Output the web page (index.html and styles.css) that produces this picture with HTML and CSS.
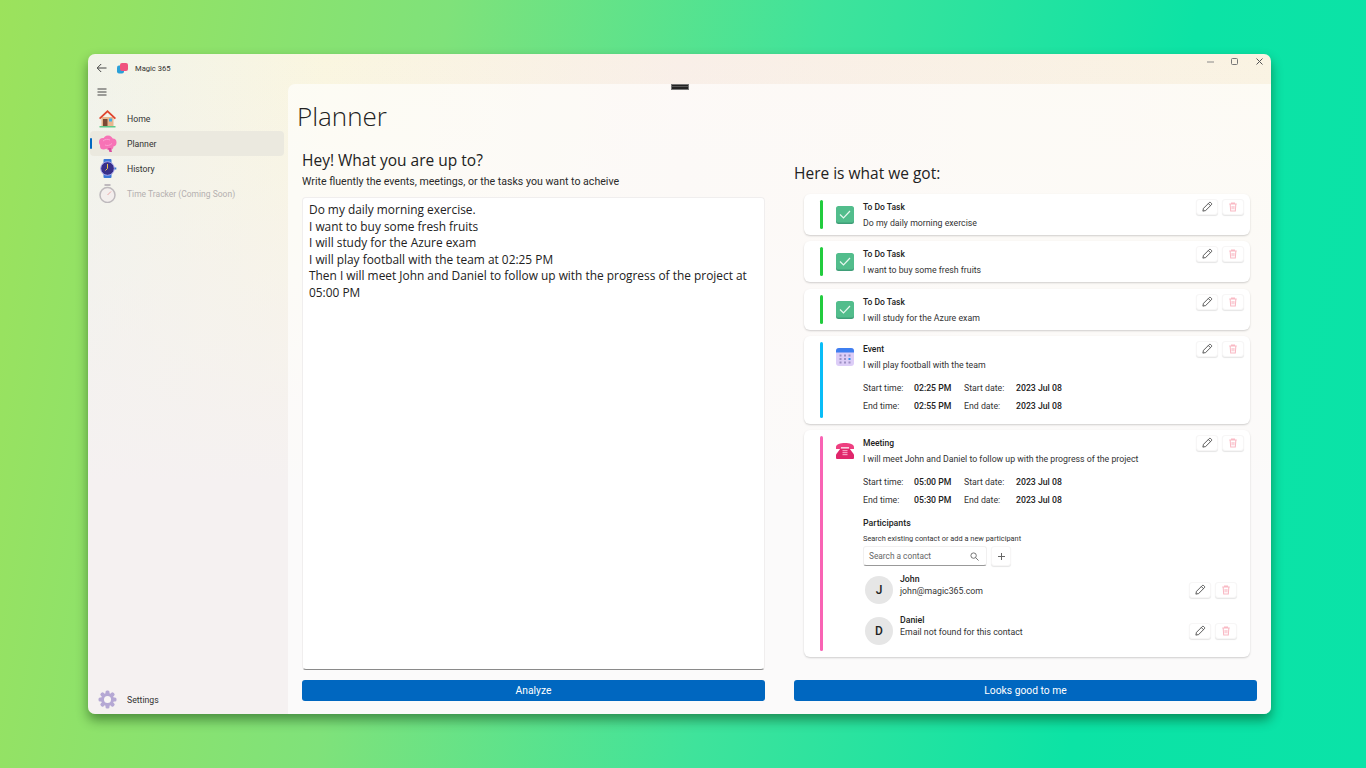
FILE: index.html
```html
<!DOCTYPE html>
<html>
  <head>
    <meta name="viewport" content="width=device-width,initial-scale=1.0">
    <title>Magic 365</title>
    <link rel="stylesheet" href="styles.css">
  </head>
  <body>
    <svg class="sprites" width="0" height="0">
      <symbol id="pencil" viewBox="0 0 16 16">
        <path d="M2.500 13.500l.8-3.700L11 2.100a1.300 1.300 0 0 1 1.900 0l1 1a1.300 1.300 0 0 1 0 1.900L6.200 12.700z M9.800 3.400l2.800 2.800" fill="none" stroke="#4a4a4a" stroke-width="1.200" stroke-linejoin="round"/>
      </symbol>
      <symbol id="trash" viewBox="0 0 16 16">
        <path d="M3 4h10 M6 4V2.700h4V4 M4.200 4l.7 9.300h6.200l.7-9.300 M6.800 6.500v4.500 M9.200 6.500v4.500" fill="none" stroke="#f9b9c4" stroke-width="1.400"/>
      </symbol>
      <symbol id="check" viewBox="0 0 18 18">
        <rect x="0" y="1" width="18" height="17" rx="2.500" fill="#3f9e78"/>
        <rect x="0" y="0" width="18" height="16.500" rx="2.500" fill="#52bd8c"/>
        <path d="M4 8.500l3.500 3.500 6.500-7" fill="none" stroke="#e6f7ee" stroke-width="1.200"/>
      </symbol>
      <symbol id="calendar" viewBox="0 0 18 18">
        <rect width="18" height="18" rx="3" fill="#dccdf7"/>
        <path d="M0 4.500V3a3 3 0 0 1 3-3h12a3 3 0 0 1 3 3v1.500z" fill="#3f7ff0"/>
        <g fill="#9c8fc4">
          <rect x="3.500" y="6.500" width="2" height="2"/><rect x="8" y="6.500" width="2" height="2"/><rect x="12.500" y="6.500" width="2" height="2"/>
          <rect x="3.500" y="10" width="2" height="2"/><rect x="8" y="10" width="2" height="2"/>
          <rect x="3.500" y="13.500" width="2" height="2"/><rect x="8" y="13.500" width="2" height="2"/><rect x="12.500" y="13.500" width="2" height="2"/>
        </g>
        <rect x="12.500" y="10" width="2" height="2" fill="#2f8ff0"/>
      </symbol>
      <symbol id="phone" viewBox="0 0 18 18">
        <path d="M4.500 6.500h9l4.500 6v3.500a1 1 0 0 1-1 1H1a1 1 0 0 1-1-1v-3.500z" fill="#e0266b"/>
        <path d="M0 5.200C0 2 4.500 1 9 1s9 1 9 4.200V7h-5V5.200H5V7H0z" fill="#ee3f80"/>
        <g fill="#f79ac0">
          <rect x="6.500" y="8" width="5" height="1.200"/><rect x="6.500" y="10" width="5" height="1.200"/><rect x="6.500" y="12" width="5" height="1.200"/>
        </g>
      </symbol>
    </svg>

    <div class="window">
      <div class="titlebar">
        <svg class="back" width="12" height="12" viewBox="0 0 12 12"><path d="M10.500 6h-9 M5.200 2L1.200 6l4 4" fill="none" stroke="#444" stroke-width="1"/></svg>
        <svg class="logo" width="11" height="11" viewBox="0 0 11 11">
          <rect x="0" y="2.500" width="7" height="8" rx="2" fill="#2aa0d8"/>
          <rect x="3" y="0" width="8" height="8" rx="2" fill="#f0527e"/>
        </svg>
        <span class="app-name">Magic 365</span>
        <div class="win-controls">
          <svg width="10" height="10" viewBox="0 0 10 10"><path d="M2 5h7" stroke="#8a8a8a"/></svg>
          <svg width="10" height="10" viewBox="0 0 10 10"><rect x="1.500" y="1.500" width="6" height="6" rx="1" fill="none" stroke="#777"/></svg>
          <svg width="10" height="10" viewBox="0 0 10 10"><path d="M1.500 1.500l6 6 M7.500 1.500l-6 6" stroke="#555"/></svg>
        </div>
      </div>

      <div class="body-row">
        <nav class="sidebar">
          <svg class="hamburger" width="12" height="10" viewBox="0 0 12 10"><path d="M1.500 2h9 M1.500 5h9 M1.500 8h9" stroke="#444"/></svg>
          <a class="nav-item">
            <svg width="19" height="19" viewBox="0 0 19 19">
              <rect x="1.500" y="17" width="16" height="1.500" fill="#5fc98a"/>
              <path d="M3.500 8h12v9h-12z" fill="#e8b78f"/>
              <path d="M9.500 1L1 9l1.200 1.200L9.500 3.600l7.300 6.600L18 9z" fill="#e0452f"/>
              <rect x="5" y="10" width="4.500" height="7" fill="#7a4a35"/>
              <rect x="11" y="9.500" width="3" height="3" fill="#3fb2ea"/>
            </svg>
            <span>Home</span>
          </a>
          <a class="nav-item active">
            <svg width="19" height="19" viewBox="0 0 19 19">
              <g fill="#f773b6">
                <circle cx="5" cy="8" r="4"/><circle cx="10" cy="6.500" r="5"/><circle cx="14.500" cy="8.500" r="4"/>
                <circle cx="5.500" cy="12" r="3.500"/><circle cx="11.500" cy="12" r="4"/>
              </g>
              <path d="M10 14h3l1 4h-2.500z" fill="#d94f9e"/>
              <path d="M5 7c2-2 5-2 7-1 M7 11c2 1 5 .5 7-1.500" fill="none" stroke="#fba5d3" stroke-width=".9"/>
            </svg>
            <span>Planner</span>
          </a>
          <a class="nav-item">
            <svg width="19" height="19" viewBox="0 0 19 19">
              <rect x="5.500" y="0" width="8" height="19" rx="1" fill="#3a78d8"/>
              <circle cx="9.500" cy="9.500" r="6.800" fill="#38308a" stroke="#aaa6ee" stroke-width="1"/>
              <path d="M9.500 5v4.500l-2 2" fill="none" stroke="#f2c84b" stroke-width="1"/>
              <rect x="16.500" y="8.500" width="1.800" height="2" fill="#3a78d8"/>
            </svg>
            <span>History</span>
          </a>
          <a class="nav-item disabled">
            <svg width="19" height="19" viewBox="0 0 19 19">
              <rect x="6.500" y="0" width="6" height="2" fill="#b5b0b5"/>
              <circle cx="9.500" cy="11" r="7.500" fill="#f4eeee" stroke="#b5b0b5" stroke-width="1.500"/>
              <path d="M9.500 11l3.500-3.500" stroke="#e89a9a" stroke-width="1"/>
            </svg>
            <span>Time Tracker (Coming Soon)</span>
          </a>
          <a class="nav-item settings">
            <svg width="19" height="19" viewBox="0 0 19 19">
              <g fill="#b5a8d4">
                <circle cx="9.500" cy="9.500" r="6.500"/>
                <rect x="7.500" y="0.500" width="4" height="18" rx="1.500"/>
                <rect x="7.500" y="0.500" width="4" height="18" rx="1.500" transform="rotate(45 9.500 9.500)"/>
                <rect x="7.500" y="0.500" width="4" height="18" rx="1.500" transform="rotate(90 9.500 9.500)"/>
                <rect x="7.500" y="0.500" width="4" height="18" rx="1.500" transform="rotate(135 9.500 9.500)"/>
              </g>
              <circle cx="9.500" cy="9.500" r="3.500" fill="#f8f5f5"/>
            </svg>
            <span>Settings</span>
          </a>
        </nav>

        <main class="pane">
          <div class="drag-handle"></div>
          <h1 class="page-title">Planner</h1>
          <div class="columns">
            <section class="col">
              <h2 class="col-heading">Hey! What you are up to?</h2>
              <p class="col-sub">Write fluently the events, meetings, or the tasks you want to acheive</p>
              <textarea class="notes" spellcheck="false">Do my daily morning exercise.
I want to buy some fresh fruits
I will study for the Azure exam
I will play football with the team at 02:25 PM
Then I will meet John and Daniel to follow up with the progress of the project at 05:00 PM</textarea>
              <button class="primary-btn">Analyze</button>
            </section>

            <section class="col">
              <h2 class="col-heading right-heading">Here is what we got:</h2>
              <div class="cards">
                <article class="card">
                  <div class="bar green"></div>
                  <svg class="card-icon"><use href="#check"/></svg>
                  <div class="card-text">
                    <h3>To Do Task</h3>
                    <p>Do my daily morning exercise</p>
                  </div>
                  <div class="actions">
                    <button class="icon-btn"><svg width="12" height="12"><use href="#pencil"/></svg></button>
                    <button class="icon-btn"><svg width="12" height="12"><use href="#trash"/></svg></button>
                  </div>
                </article>
                <article class="card">
                  <div class="bar green"></div>
                  <svg class="card-icon"><use href="#check"/></svg>
                  <div class="card-text">
                    <h3>To Do Task</h3>
                    <p>I want to buy some fresh fruits</p>
                  </div>
                  <div class="actions">
                    <button class="icon-btn"><svg width="12" height="12"><use href="#pencil"/></svg></button>
                    <button class="icon-btn"><svg width="12" height="12"><use href="#trash"/></svg></button>
                  </div>
                </article>
                <article class="card">
                  <div class="bar green"></div>
                  <svg class="card-icon"><use href="#check"/></svg>
                  <div class="card-text">
                    <h3>To Do Task</h3>
                    <p>I will study for the Azure exam</p>
                  </div>
                  <div class="actions">
                    <button class="icon-btn"><svg width="12" height="12"><use href="#pencil"/></svg></button>
                    <button class="icon-btn"><svg width="12" height="12"><use href="#trash"/></svg></button>
                  </div>
                </article>

                <article class="card">
                  <div class="bar blue"></div>
                  <svg class="card-icon"><use href="#calendar"/></svg>
                  <div class="card-text">
                    <h3>Event</h3>
                    <p>I will play football with the team</p>
                    <div class="times">
                      <span>Start time:</span><b>02:25 PM</b><span>Start date:</span><b>2023 Jul 08</b>
                      <span>End time:</span><b>02:55 PM</b><span>End date:</span><b>2023 Jul 08</b>
                    </div>
                  </div>
                  <div class="actions">
                    <button class="icon-btn"><svg width="12" height="12"><use href="#pencil"/></svg></button>
                    <button class="icon-btn"><svg width="12" height="12"><use href="#trash"/></svg></button>
                  </div>
                </article>

                <article class="card">
                  <div class="bar pink"></div>
                  <svg class="card-icon"><use href="#phone"/></svg>
                  <div class="card-text">
                    <h3>Meeting</h3>
                    <p>I will meet John and Daniel to follow up with the progress of the project</p>
                    <div class="times">
                      <span>Start time:</span><b>05:00 PM</b><span>Start date:</span><b>2023 Jul 08</b>
                      <span>End time:</span><b>05:30 PM</b><span>End date:</span><b>2023 Jul 08</b>
                    </div>
                    <h4 class="part-title">Participants</h4>
                    <div class="part-hint">Search existing contact or add a new participant</div>
                    <div class="search-row">
                      <div class="search-box">
                        <span>Search a contact</span>
                        <svg width="9" height="9" viewBox="0 0 10 10"><circle cx="4" cy="4" r="3" fill="none" stroke="#666"/><path d="M6.200 6.200L9.500 9.500" stroke="#666"/></svg>
                      </div>
                      <button class="icon-btn add-btn"><svg width="9" height="9" viewBox="0 0 9 9"><path d="M4.500 1v7 M1 4.500h7" stroke="#666"/></svg></button>
                    </div>
                    <div class="person">
                      <div class="avatar">J</div>
                      <div class="person-text">
                        <strong>John</strong>
                        <span>john@magic365.com</span>
                      </div>
                      <div class="person-actions">
                        <button class="icon-btn"><svg width="12" height="12"><use href="#pencil"/></svg></button>
                        <button class="icon-btn"><svg width="12" height="12"><use href="#trash"/></svg></button>
                      </div>
                    </div>
                    <div class="person">
                      <div class="avatar">D</div>
                      <div class="person-text">
                        <strong>Daniel</strong>
                        <span>Email not found for this contact</span>
                      </div>
                      <div class="person-actions">
                        <button class="icon-btn"><svg width="12" height="12"><use href="#pencil"/></svg></button>
                        <button class="icon-btn"><svg width="12" height="12"><use href="#trash"/></svg></button>
                      </div>
                    </div>
                  </div>
                  <div class="actions">
                    <button class="icon-btn"><svg width="12" height="12"><use href="#pencil"/></svg></button>
                    <button class="icon-btn"><svg width="12" height="12"><use href="#trash"/></svg></button>
                  </div>
                </article>
              </div>
              <button class="primary-btn">Looks good to me</button>
            </section>
          </div>
        </main>
      </div>
    </div>
  </body>
</html>
```

FILE: styles.css
```css
* { box-sizing: border-box; }
html, body { height: 100%; }
body {
  margin: 0;
  padding: 54px 95px 54px 88px;
  overflow: hidden;
  background: linear-gradient(100deg, #9ce25c 0%, #7fe27a 30%, #3fe39b 55%, #0ce3a5 80%, #0ae3a8 100%);
  font-family: Roboto, "Open Sans", sans-serif;
  color: #1b1b1b;
}
.sprites { position: absolute; }

.window {
  height: 660px;
  display: flex;
  flex-direction: column;
  border-radius: 7px;
  overflow: hidden;
  background:
    linear-gradient(180deg, rgba(245, 241, 241, 0) 0%, #f5f1f1 65%),
    linear-gradient(90deg, #f1f3ea 0%, #faf6e0 20%, #f9efe8 50%, #faf3e2 100%);
  box-shadow: 0 6px 12px rgba(0, 40, 0, 0.45);
}

.titlebar { height: 30px; flex: none; display: flex; align-items: center; padding: 0 0 2px 8px; position: relative; }
.back { margin-right: 9px; }
.logo { margin-right: 7px; }
.app-name { font-size: 7.600px; color: #333; }
.win-controls { margin-left: auto; display: flex; gap: 15px; padding-right: 6px; align-self: flex-start; padding-top: 3px; }

.body-row { flex: 1; display: flex; min-height: 0; }

.sidebar { width: 200px; flex: none; display: flex; flex-direction: column; padding: 0 4px 0 2px; }
.hamburger { margin: 3px 0 9px 6px; flex: none; }
.nav-item { height: 25px; display: flex; align-items: center; gap: 10px; padding-left: 8px; font-size: 8.700px; color: #333; border-radius: 4px; position: relative; }
.nav-item.active { background: #ebe9df; }
.nav-item.active::before { content: ""; position: absolute; left: 0; top: 7px; width: 2px; height: 11px; background: #0067c0; border-radius: 2px; }
.nav-item.disabled { color: #b4b0b0; font-size: 8.500px; }
.nav-item.disabled svg { opacity: 0.85; }
.settings { margin-top: auto; margin-bottom: 2px; }

.pane {
  flex: 1;
  position: relative;
  display: flex;
  flex-direction: column;
  padding: 0 14px 13px 14px;
  border-top-left-radius: 7px;
  background: rgba(255, 255, 255, 0.62);
}
.drag-handle { position: absolute; left: 383px; top: 0; width: 18px; height: 6px; background: linear-gradient(180deg, #222 30%, #555 30%, #555 60%, #222 60%); border: 1px solid #777; }
.page-title { margin: 12px 0 0 -5px; font-family: "Open Sans", sans-serif; font-size: 26px; font-weight: 300; line-height: 40px; height: 40px; color: #222; }

.columns { flex: 1; min-height: 0; display: grid; grid-template-columns: 463px 463px; column-gap: 29px; margin-top: 13px; }
.col { display: flex; flex-direction: column; min-height: 0; }
.col-heading { margin: 0; font-family: "Open Sans", sans-serif; font-size: 15.500px; font-weight: 400; line-height: 22px; color: #222; }
.right-heading { margin: 13px 0 0; }
.col-sub { margin: 3px 0 0; font-size: 10.600px; line-height: 16px; color: #2a2a2a; }

.notes {
  flex: 1;
  display: block;
  margin-top: 7px;
  padding: 3px 6px;
  border: 1px solid #f0eeee;
  border-bottom: 1px solid #8a8a8a;
  border-radius: 4px;
  background: #fff;
  resize: none;
  overflow: hidden;
  outline: none;
  font: 11.900px/16.500px "Open Sans", sans-serif;
  color: #222;
}

.primary-btn {
  flex: none;
  height: 21px;
  margin-top: 10px;
  padding: 0 0 1px;
  border: none;
  border-radius: 3px;
  background: #0067c0;
  color: #fff;
  font: 10.300px Roboto, "Open Sans", sans-serif;
}

.cards { flex: 1; display: flex; flex-direction: column; gap: 6.300px; margin: 10px 7px 0 10px; }
.card {
  display: flex;
  align-items: flex-start;
  padding: 6px 6px 6px 16px;
  background: #fff;
  border-radius: 6px;
  box-shadow: 0 1px 2px rgba(0, 0, 0, 0.18);
}
.bar { flex: none; width: 3px; align-self: stretch; border-radius: 2px; margin-right: 13px; min-height: 29px; }
.bar.green { background: #22cc3e; }
.bar.blue { background: #09bdf7; }
.bar.pink { background: #f963b4; }
.card-icon { flex: none; width: 18px; height: 18px; margin: 6px 9px 0 0; }
.card-text { flex: 1; min-width: 0; margin-bottom: -1px; font-size: 8.750px; line-height: 14px; color: #333; }
.card-text h3 { margin: 0; font-size: 8.500px; line-height: 14px; font-weight: 500; color: #222; }
.card-text p { margin: 2px 0 0; }
.card-text p, .times, .person-text span { white-space: nowrap; }

.actions { flex: none; display: flex; gap: 4px; margin-top: -1px; }
.icon-btn {
  width: 22px;
  height: 16px;
  padding: 0;
  display: flex;
  align-items: center;
  justify-content: center;
  background: #fff;
  border: 1px solid #f7f6f6;
  border-radius: 3px;
  box-shadow: 0 1px 1px rgba(0, 0, 0, 0.1);
}

.times { display: grid; grid-template-columns: 51px 50px 52px auto; row-gap: 4px; margin: 9px 0 6px; }
.times span, .times b { line-height: 14px; }
.times b { font-size: 8.700px; font-weight: 500; color: #222; }

.part-title { margin: 9px 0 0; font-size: 8.800px; line-height: 14px; font-weight: 500; color: #222; }
.part-hint { margin-top: 3px; font-size: 7.400px; line-height: 12px; color: #333; }
.search-row { display: flex; gap: 4px; margin-top: 1px; margin-bottom: 3px; }
.search-box {
  width: 124px;
  height: 20px;
  display: flex;
  align-items: center;
  justify-content: space-between;
  padding: 0 7px 0 5px;
  font-size: 8.300px;
  color: #666;
  background: #fff;
  border: 1px solid #f1f0f0;
  border-bottom: 1px solid #999;
  border-radius: 3px;
}
.add-btn { width: 20px; height: 20px; }

.person { display: flex; align-items: center; height: 41px; padding-left: 2px; margin-right: -41px; }
.person:last-child { margin-bottom: 1px; }
.avatar {
  width: 28px;
  height: 28px;
  flex: none;
  display: flex;
  align-items: center;
  justify-content: center;
  border-radius: 50%;
  background: #e6e6e6;
  font-size: 12px;
  font-weight: 500;
  color: #222;
}
.person-text { flex: 1; display: flex; flex-direction: column; margin: -10px 0 0 7px; line-height: 12px; }
.person-text strong { font-weight: 500; color: #222; }
.person-actions { display: flex; gap: 4px; }
```
